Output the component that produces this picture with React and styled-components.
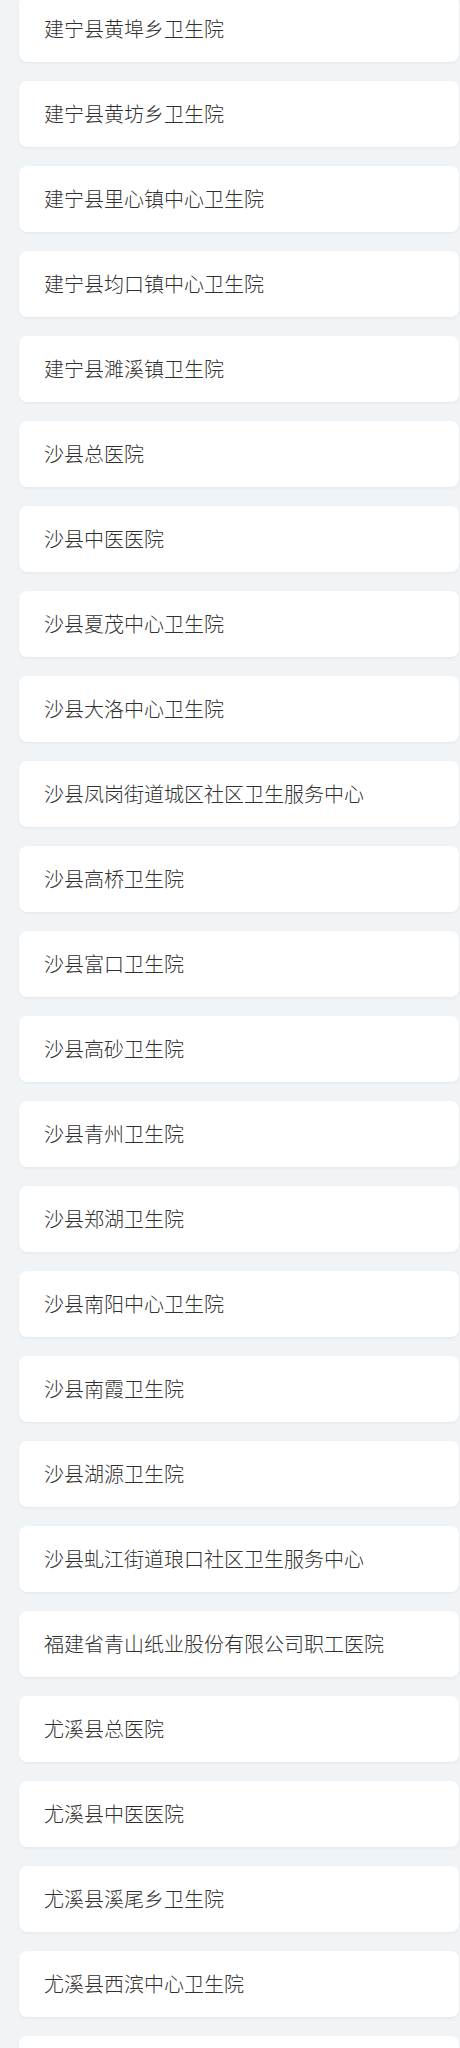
import React from "react";
import styled, { createGlobalStyle } from "styled-components";

const GlobalStyle = createGlobalStyle`
  html, body {
    margin: 0;
    padding: 0;
    overflow: hidden;
    background: #f0f4f7;
  }
  body {
    font-family: "Noto Sans CJK SC", "Noto Sans", sans-serif;
  }
`;

const List = styled.div`
  display: flex;
  flex-direction: column;
  gap: 19px;
  margin-top: -4px;
  padding: 0 1px 0 19px;
`;

const Card = styled.div`
  height: 66px;
  display: flex;
  align-items: center;
  padding: 0 25px;
  background: #ffffff;
  border-radius: 8px;
  box-shadow: 0 1px 3px rgba(0, 0, 0, 0.06);
  box-sizing: border-box;
`;

const Name = styled.span`
  font-size: 20px;
  font-weight: 300;
  line-height: 1;
  color: #303030;
  white-space: nowrap;
`;

const hospitals = [
  "建宁县黄埠乡卫生院",
  "建宁县黄坊乡卫生院",
  "建宁县里心镇中心卫生院",
  "建宁县均口镇中心卫生院",
  "建宁县濉溪镇卫生院",
  "沙县总医院",
  "沙县中医医院",
  "沙县夏茂中心卫生院",
  "沙县大洛中心卫生院",
  "沙县凤岗街道城区社区卫生服务中心",
  "沙县高桥卫生院",
  "沙县富口卫生院",
  "沙县高砂卫生院",
  "沙县青州卫生院",
  "沙县郑湖卫生院",
  "沙县南阳中心卫生院",
  "沙县南霞卫生院",
  "沙县湖源卫生院",
  "沙县虬江街道琅口社区卫生服务中心",
  "福建省青山纸业股份有限公司职工医院",
  "尤溪县总医院",
  "尤溪县中医医院",
  "尤溪县溪尾乡卫生院",
  "尤溪县西滨中心卫生院",
];

export default function App() {
  return (
    <>
      <GlobalStyle />
      <List>
        {hospitals.map((name) => (
          <Card key={name}>
            <Name>{name}</Name>
          </Card>
        ))}
        {/* next row starts just below the fold */}
        <Card />
      </List>
    </>
  );
}
